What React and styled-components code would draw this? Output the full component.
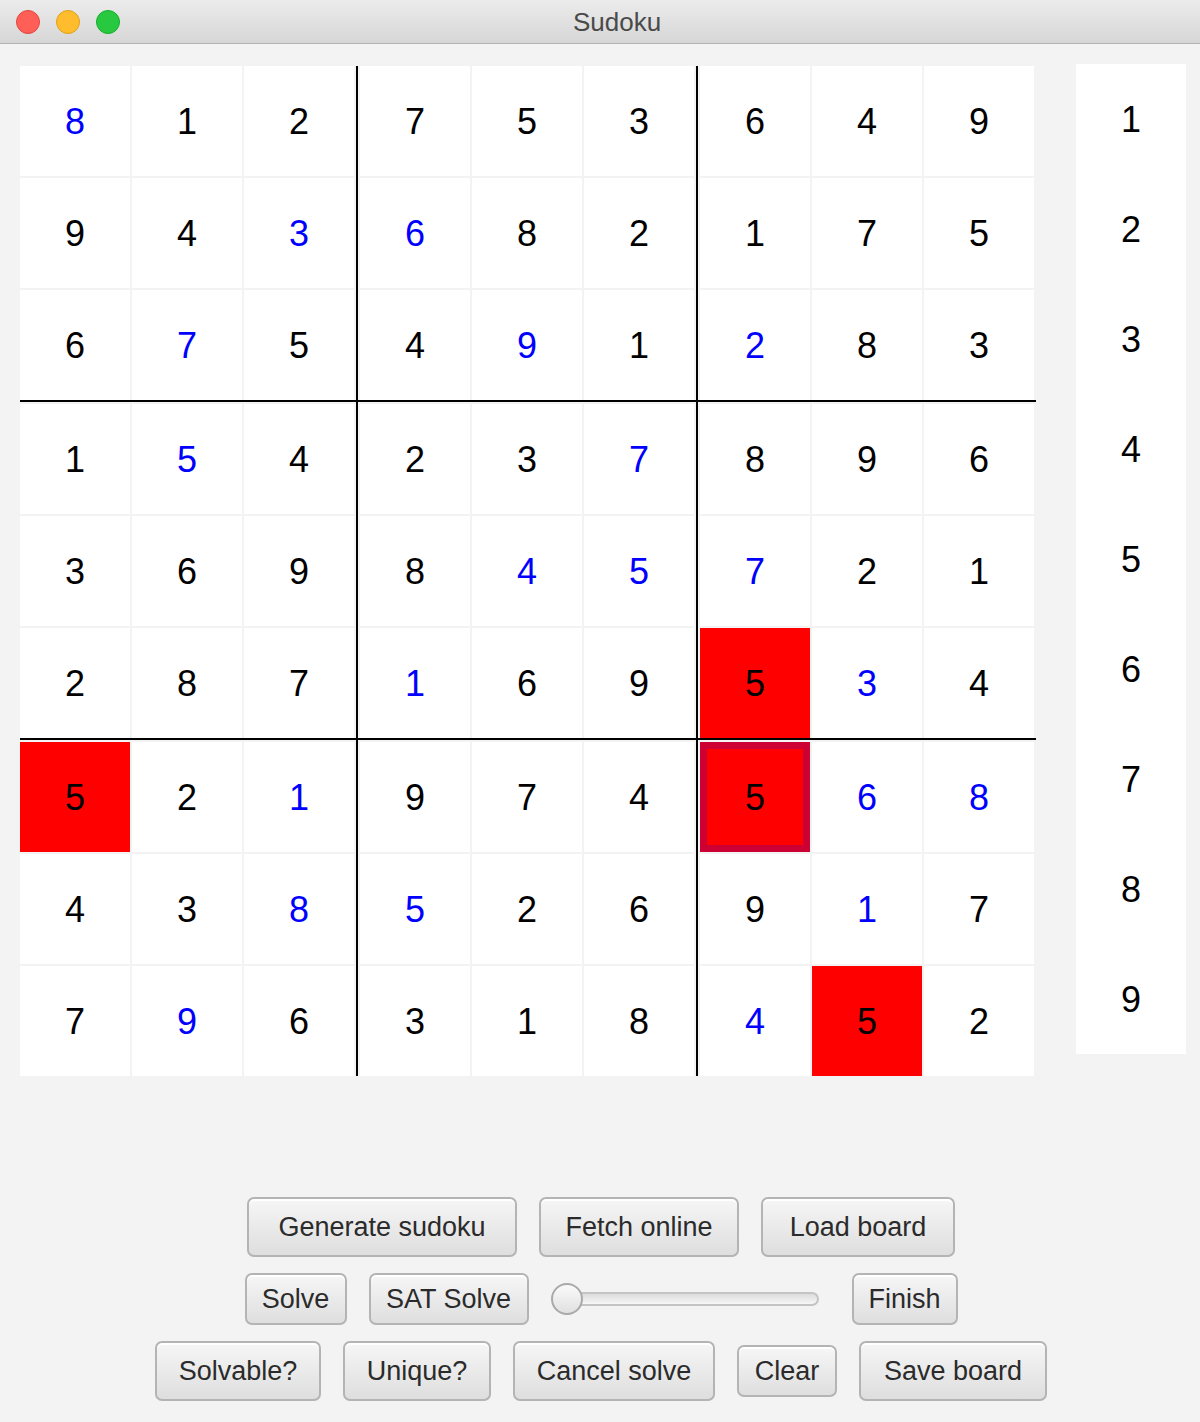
import React from "react";
import styled, { createGlobalStyle } from "styled-components";

const Global = createGlobalStyle`
  html, body { margin: 0; padding: 0; background: #f3f3f3; }
  body { font-family: "Liberation Sans", Arial, sans-serif; }
`;

const Window = styled.div`
  width: 1200px;
  height: 1422px;
  background: #f3f3f3;
  display: flex;
  flex-direction: column;
  overflow: hidden;
`;

const TitleBar = styled.div`
  height: 43px;
  flex: none;
  display: flex;
  align-items: center;
  padding-left: 16px;
  background: linear-gradient(to bottom, #ececec, #d6d6d6);
  border-bottom: 1px solid #b2b2b2;
`;

const Lights = styled.div`
  display: flex;
  gap: 16px;
`;

const Light = styled.span`
  width: 22px;
  height: 22px;
  border-radius: 50%;
  background: ${(p) => p.$fill};
  border: 1px solid ${(p) => p.$edge};
`;

const Title = styled.div`
  margin-left: 453px;
  font-size: 26px;
  color: #4a4a4a;
  line-height: 1;
`;

const Main = styled.div`
  display: flex;
  align-items: flex-start;
  padding: 20px 0 0 20px;
`;

const Board = styled.div`
  margin-top: 2px;
  display: grid;
  grid-template-columns: 334px 6px 334px 6px 334px;
  grid-template-rows: 334px 4px 334px 4px 334px;
`;

const Box = styled.div`
  display: grid;
  grid-template-columns: repeat(3, 110px);
  grid-template-rows: repeat(3, 110px);
  gap: 2px;
`;

const VLine = styled.div`
  grid-row: 1 / -1;
  grid-column: ${(p) => p.$col};
  justify-self: center;
  width: 2px;
  background: #000;
`;

const HLine = styled.div`
  grid-column: 1 / -1;
  grid-row: ${(p) => p.$row};
  align-self: start;
  height: 2px;
  margin-right: -2px;
  background: #000;
`;

const Cell = styled.div`
  display: flex;
  align-items: center;
  justify-content: center;
  padding-top: 2px;
  box-sizing: border-box;
  background: ${(p) => (p.$red ? "#ff0000" : "#ffffff")};
  box-shadow: ${(p) => (p.$selected ? "inset 0 0 0 7px #cc0033" : "none")};
  color: ${(p) => (p.$user ? "#0000ff" : "#000000")};
  font-size: 36px;
  line-height: 1;
`;

const Palette = styled.div`
  margin-left: 42px;
  width: 110px;
  background: #ffffff;
  display: flex;
  flex-direction: column;
`;

const PaletteItem = styled.div`
  height: 110px;
  display: flex;
  align-items: center;
  justify-content: center;
  padding-top: 2px;
  box-sizing: border-box;
  font-size: 36px;
  color: #000;
`;

const Controls = styled.div`
  margin-top: 121px;
  display: flex;
  flex-direction: column;
  gap: 16px;
  padding-left: 2px;
`;

const ButtonRow = styled.div`
  display: flex;
  justify-content: center;
  align-items: center;
  gap: 22px;
`;

const Button = styled.button`
  box-sizing: border-box;
  width: ${(p) => p.$w}px;
  height: ${(p) => (p.$short ? "52px" : "60px")};
  padding: 0;
  font-family: "Liberation Sans", Arial, sans-serif;
  font-size: 27px;
  color: #2b2b2b;
  border: 2px solid #b4b4b4;
  border-radius: 7px;
  background: linear-gradient(to bottom, #f6f6f6, #dedede);
  box-shadow: inset 0 2px 0 #ffffff;
  cursor: pointer;
`;

const Slider = styled.div`
  position: relative;
  width: 268px;
  height: 34px;
  display: flex;
  align-items: center;
  margin-right: 11px;
`;

const Track = styled.div`
  flex: 1;
  margin-left: 8px;
  height: 14px;
  box-sizing: border-box;
  border: 2px solid #c4c4c4;
  border-radius: 7px;
  background: linear-gradient(to bottom, #dcdcdc, #f7f7f7);
`;

const Thumb = styled.div`
  position: absolute;
  left: 0;
  top: 1px;
  width: 32px;
  height: 32px;
  box-sizing: border-box;
  border-radius: 50%;
  border: 2px solid #a9a9a9;
  background: linear-gradient(to bottom, #fafafa, #e0e0e0);
`;

// value, user-entered (blue), red, selected
const B = (v) => ({ v, u: true });
const K = (v) => ({ v });
const R = (v, s) => ({ v, r: true, s });

const rows = [
  [B(8), K(1), K(2), K(7), K(5), K(3), K(6), K(4), K(9)],
  [K(9), K(4), B(3), B(6), K(8), K(2), K(1), K(7), K(5)],
  [K(6), B(7), K(5), K(4), B(9), K(1), B(2), K(8), K(3)],
  [K(1), B(5), K(4), K(2), K(3), B(7), K(8), K(9), K(6)],
  [K(3), K(6), K(9), K(8), B(4), B(5), B(7), K(2), K(1)],
  [K(2), K(8), K(7), B(1), K(6), K(9), R(5), B(3), K(4)],
  [R(5), K(2), B(1), K(9), K(7), K(4), R(5, true), B(6), B(8)],
  [K(4), K(3), B(8), B(5), K(2), K(6), K(9), B(1), K(7)],
  [K(7), B(9), K(6), K(3), K(1), K(8), B(4), R(5), K(2)],
];

function boxCells(br, bc) {
  const out = [];
  for (let r = 0; r < 3; r++)
    for (let c = 0; c < 3; c++) out.push(rows[br * 3 + r][bc * 3 + c]);
  return out;
}

export default function App() {
  const boxes = [];
  for (let br = 0; br < 3; br++)
    for (let bc = 0; bc < 3; bc++)
      boxes.push(
        <Box
          key={`${br}-${bc}`}
          style={{ gridRow: br * 2 + 1, gridColumn: bc * 2 + 1 }}
        >
          {boxCells(br, bc).map((c, i) => (
            <Cell key={i} $user={c.u} $red={c.r} $selected={c.s}>
              {c.v}
            </Cell>
          ))}
        </Box>
      );

  return (
    <>
      <Global />
      <Window>
        <TitleBar>
          <Lights>
            <Light $fill="#ff5f57" $edge="#e2463f" />
            <Light $fill="#ffbd2e" $edge="#e1a116" />
            <Light $fill="#28c940" $edge="#14ae2a" />
          </Lights>
          <Title>Sudoku</Title>
        </TitleBar>
        <Main>
          <Board>
            {boxes}
            <VLine $col={2} />
            <VLine $col={4} />
            <HLine $row={2} />
            <HLine $row={4} />
          </Board>
          <Palette>
            {[1, 2, 3, 4, 5, 6, 7, 8, 9].map((n) => (
              <PaletteItem key={n}>{n}</PaletteItem>
            ))}
          </Palette>
        </Main>
        <Controls>
          <ButtonRow>
            <Button $w={270}>Generate sudoku</Button>
            <Button $w={200}>Fetch online</Button>
            <Button $w={194}>Load board</Button>
          </ButtonRow>
          <ButtonRow>
            <Button $short $w={102}>Solve</Button>
            <Button $short $w={160}>SAT Solve</Button>
            <Slider>
              <Track />
              <Thumb />
            </Slider>
            <Button $short $w={106}>Finish</Button>
          </ButtonRow>
          <ButtonRow>
            <Button $w={166}>Solvable?</Button>
            <Button $w={148}>Unique?</Button>
            <Button $w={202}>Cancel solve</Button>
            <Button $short $w={100}>Clear</Button>
            <Button $w={188}>Save board</Button>
          </ButtonRow>
        </Controls>
      </Window>
    </>
  );
}
